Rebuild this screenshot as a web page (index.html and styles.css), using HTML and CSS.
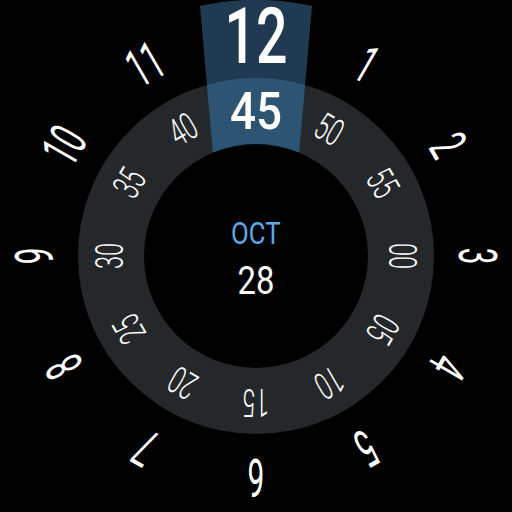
FILE: index.html
```html
<!DOCTYPE html>
<html>
<head>
<meta charset="utf-8">
<link rel="stylesheet" href="styles.css">
</head>
<body>
<div class="face">
  <svg class="art" width="512" height="512" viewBox="0 0 512 512">
    <defs>
      <clipPath id="ringclip"><circle cx="256" cy="256" r="178"/></clipPath>
      <path id="band" d="M200 6 A256 256 0 0 1 312 6 L298 165 L214 165 Z"/>
    </defs>
    <circle cx="256" cy="256" r="178" fill="#25282b"/>
    <use href="#band" fill="#203b51"/>
    <use href="#band" fill="#2e5473" clip-path="url(#ringclip)"/>
    <circle cx="256" cy="256" r="112" fill="#000"/>
  </svg>

  <div class="hours">
    <span class="lbl hour big" style="--a:0deg">12</span>
    <span class="lbl hour" style="--a:30deg">1</span>
    <span class="lbl hour" style="--a:60deg">2</span>
    <span class="lbl hour" style="--a:90deg">3</span>
    <span class="lbl hour" style="--a:120deg">4</span>
    <span class="lbl hour" style="--a:150deg">5</span>
    <span class="lbl hour" style="--a:180deg">6</span>
    <span class="lbl hour" style="--a:210deg">7</span>
    <span class="lbl hour" style="--a:240deg">8</span>
    <span class="lbl hour" style="--a:270deg">9</span>
    <span class="lbl hour" style="--a:300deg">10</span>
    <span class="lbl hour" style="--a:330deg">11</span>
  </div>

  <div class="minutes">
    <span class="lbl min big" style="--a:0deg">45</span>
    <span class="lbl min" style="--a:30deg">50</span>
    <span class="lbl min" style="--a:60deg">55</span>
    <span class="lbl min" style="--a:90deg">00</span>
    <span class="lbl min" style="--a:120deg">05</span>
    <span class="lbl min" style="--a:150deg">10</span>
    <span class="lbl min" style="--a:180deg">15</span>
    <span class="lbl min" style="--a:210deg">20</span>
    <span class="lbl min" style="--a:240deg">25</span>
    <span class="lbl min" style="--a:270deg">30</span>
    <span class="lbl min" style="--a:300deg">35</span>
    <span class="lbl min" style="--a:330deg">40</span>
  </div>

  <div class="date">
    <span class="month">OCT</span>
    <span class="day">28</span>
  </div>
</div>
</body>
</html>
```

FILE: styles.css
```css
html, body {
  margin: 0;
  padding: 0;
  background: #000;
}

.face {
  position: relative;
  width: 512px;
  height: 512px;
  overflow: hidden;
  background: #000;
  font-family: Roboto, "Liberation Sans", sans-serif;
  color: #fff;
  display: flex;
  align-items: center;
  justify-content: center;
}

.art {
  position: absolute;
  left: 0;
  top: 0;
}

.hours, .minutes {
  position: absolute;
  left: 0;
  top: 0;
  width: 512px;
  height: 512px;
}

.lbl {
  position: absolute;
  left: 206px;
  top: 231px;
  width: 100px;
  height: 50px;
  display: flex;
  align-items: center;
  justify-content: center;
  line-height: 0.9;
  white-space: nowrap;
  transform: rotate(var(--a)) translateY(var(--r)) scaleX(var(--sx));
}

.hour {
  --r: -220px;
  --sx: 0.56;
  font-size: 53px;
  font-weight: 400;
}

.hour.big {
  --r: -218px;
  --sx: 0.72;
  font-size: 77px;
  font-weight: 500;
  line-height: 0.85;
}

.min {
  --r: -146px;
  --sx: 0.62;
  font-size: 38px;
  font-weight: 300;
}

.min.big {
  --r: -144px;
  --sx: 0.88;
  font-size: 52px;
  font-weight: 500;
}

.date {
  position: relative;
  margin-top: 8px;
  display: flex;
  flex-direction: column;
  align-items: center;
  gap: 12px;
}

.month {
  font-size: 31px;
  line-height: 30px;
  color: #5ea9e8;
  transform: scaleX(0.83);
}

.day {
  font-size: 39px;
  line-height: 40px;
  color: #fff;
  transform: scaleX(0.84);
}
```
